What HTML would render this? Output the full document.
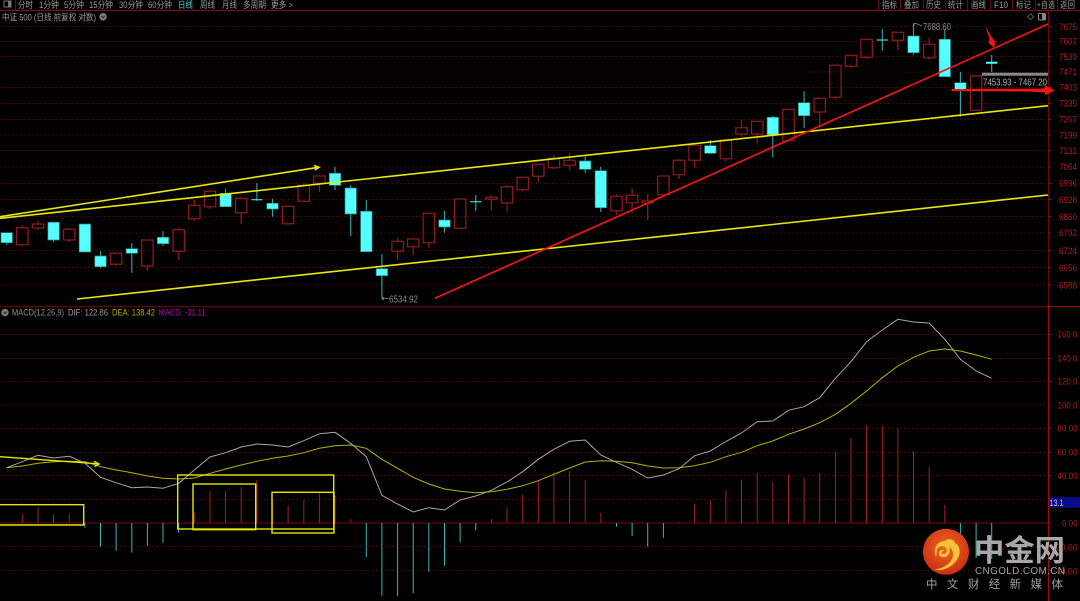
<!DOCTYPE html>
<html>
<head>
<meta charset="utf-8">
<style>
html,body{margin:0;padding:0;background:#000;width:1080px;height:601px;overflow:hidden}
svg{display:block}
text{font-family:"Liberation Sans","Noto Sans CJK SC",sans-serif}
.tb text{font-size:9px;fill:#9a9a9a}
.ax text{font-size:9.5px;fill:#b01c1c}
</style>
</head>
<body>
<svg width="1080" height="601" viewBox="0 0 1080 601" xmlns="http://www.w3.org/2000/svg">
<rect width="1080" height="601" fill="#000"/>
<!-- grid -->
<g stroke="#5a0808" stroke-width="1" stroke-dasharray="1 3" fill="none">
<path d="M0 26.5H1048M0 41.5H1048M0 56.5H1048M0 72H1048M0 87.5H1048M0 103.5H1048M0 119.5H1048M0 135H1048M0 150.5H1048M0 167H1048M0 183.5H1048M0 199.5H1048M0 216.5H1048M0 233H1048M0 250.5H1048M0 267.5H1048M0 285H1048"/>
<path d="M0 334.5H1048M0 358.5H1048M0 381.5H1048M0 405H1048M0 428.5H1048M0 452.5H1048M0 475.5H1048M0 499.5H1048M0 546.5H1048M0 570.5H1048"/>
</g>
<path d="M0 523H1048" stroke="#4a0808" stroke-width="1.4"/>
<!-- frame -->
<path d="M0 10.5H1080" stroke="#8a0a14" stroke-width="1"/>
<path d="M0 306.7H1048" stroke="#6a0a0a" stroke-width="1.2"/>
<path d="M1048 306.7H1080" stroke="#b00c0c" stroke-width="1"/>
<path d="M1048.4 10V306" stroke="#7a0808" stroke-width="1"/>
<path d="M1048.4 306V601" stroke="#b80c0c" stroke-width="1"/>
<path d="M15.5 0V10M878.5 0V10M900.5 0V10M923.5 0V10M945.5 0V10M967.5 0V10M990.5 0V10M1012.5 0V10M1035.5 0V10M1057.5 0V10" stroke="#6a0a12" stroke-width="1"/>
<path d="M1048 26.5h4M1048 41.5h4M1048 56.5h4M1048 72h4M1048 87.5h4M1048 103.5h4M1048 119.5h4M1048 135h4M1048 150.5h4M1048 167h4M1048 183.5h4M1048 199.5h4M1048 216.5h4M1048 233h4M1048 250.5h4M1048 267.5h4M1048 285h4M1048 334.5h4M1048 358.5h4M1048 381.5h4M1048 405h4M1048 428.5h4M1048 452.5h4M1048 475.5h4M1048 523h4M1048 546.5h4M1048 570.5h4" stroke="#8a0a0a" stroke-width="1"/>
<!-- toolbar -->
<rect x="4" y="1" width="7" height="6" fill="none" stroke="#777" stroke-width="1"/>
<rect x="8" y="1" width="3" height="6" fill="#777"/>
<g class="tb">
<text x="18" y="7.8" textLength="15" lengthAdjust="spacingAndGlyphs">分时</text>
<text x="39" y="7.8" textLength="20" lengthAdjust="spacingAndGlyphs">1分钟</text>
<text x="64" y="7.8" textLength="20" lengthAdjust="spacingAndGlyphs">5分钟</text>
<text x="89" y="7.8" textLength="24" lengthAdjust="spacingAndGlyphs">15分钟</text>
<text x="119" y="7.8" textLength="24" lengthAdjust="spacingAndGlyphs">30分钟</text>
<text x="148" y="7.8" textLength="24" lengthAdjust="spacingAndGlyphs">60分钟</text>
<text x="178" y="7.8" textLength="15" lengthAdjust="spacingAndGlyphs" style="fill:#3fd8d8">日线</text>
<text x="200" y="7.8" textLength="15" lengthAdjust="spacingAndGlyphs">周线</text>
<text x="222" y="7.8" textLength="15" lengthAdjust="spacingAndGlyphs">月线</text>
<text x="243" y="7.8" textLength="23" lengthAdjust="spacingAndGlyphs">多周期</text>
<text x="271" y="7.8" textLength="22" lengthAdjust="spacingAndGlyphs">更多 &gt;</text>
<text x="882" y="7.8" textLength="15" lengthAdjust="spacingAndGlyphs">指标</text>
<text x="904" y="7.8" textLength="15" lengthAdjust="spacingAndGlyphs">叠加</text>
<text x="926" y="7.8" textLength="15" lengthAdjust="spacingAndGlyphs">历史</text>
<text x="948" y="7.8" textLength="15" lengthAdjust="spacingAndGlyphs">统计</text>
<text x="971" y="7.8" textLength="15" lengthAdjust="spacingAndGlyphs">画线</text>
<text x="994" y="7.8" textLength="14" lengthAdjust="spacingAndGlyphs">F10</text>
<text x="1016" y="7.8" textLength="15" lengthAdjust="spacingAndGlyphs">标记</text>
<text x="1037" y="7.8" textLength="18" lengthAdjust="spacingAndGlyphs">+自选</text>
<text x="1060" y="7.8" textLength="15" lengthAdjust="spacingAndGlyphs">返回</text>
<text x="2" y="20.5" textLength="94" lengthAdjust="spacingAndGlyphs">中证 500 (日线 前复权 对数)</text>
</g>
<circle cx="103" cy="16.8" r="3.8" fill="#777"/>
<path d="M101.4 16l1.6 1.8 1.6-1.8" fill="none" stroke="#222" stroke-width=".8"/>
<path d="M1030.5 13.7l3 3-3 3-3-3z" fill="none" stroke="#666" stroke-width=".9"/>
<rect x="1038.5" y="13.5" width="7" height="6.5" rx="1" fill="none" stroke="#888" stroke-width="1"/>
<rect x="1042" y="14" width="3" height="5.5" fill="#888"/>
<!-- candle wicks + red candles -->
<path fill="none" stroke="#8e1a1e" stroke-width="1.25" d="
M22.3 225.3V227.7M22.3 244.7V246M16.6 227.7h11.4v17h-11.4z
M38 220.7V224M38 228V230M32.3 224h11.4v4h-11.4z
M69.2 228V229.3M69.2 240V242M63.5 229.3h11.4v10.7h-11.4z
M116.1 264.3V265.7M110.4 253.3h11.4v11h-11.4z
M147.4 266V270.7M141.7 240h11.4v26h-11.4z
M178.7 228V229.7M178.7 251.3V260M173 229.7h11.4v21.6h-11.4z
M194.3 200V205.3M194.3 218.7V220.7M188.6 205.3h11.4v13.4h-11.4z
M210 206.7V208.7M204.3 191.3h11.4v15.4h-11.4z
M241.2 212.7V224M235.5 198.3h11.4v14.4h-11.4z
M288.1 223.7V224.7M282.4 206.3h11.4v17.4h-11.4z
M303.8 183.3V185.3M298.1 185.3h11.4v16h-11.4z
M319.4 183.3V192M313.7 176h11.4v7.3h-11.4z
M397.6 238V241.3M397.6 251.3V260M391.9 241.3h11.4v10h-11.4z
M413.2 238V239M413.2 246.7V255M407.5 239h11.4v7.7h-11.4z
M428.8 242.7V248M423.1 213.3h11.4v29.4h-11.4z
M454.4 199h11.4v29.3h-11.4z
M491.4 195V197.3M491.4 199.3V210M485.7 197.3h11.4v2h-11.4z
M507 185V186.7M507 203V211.7M501.3 186.7h11.4v16.3h-11.4z
M522.7 189.7V191.7M517 177.3h11.4v12.4h-11.4z
M538.3 176.3V182M532.6 164.3h11.4v12h-11.4z
M553.9 154.7V158.3M553.9 167.7V169.3M548.2 158.3h11.4v9.4h-11.4z
M569.6 152.7V160.3M569.6 165.3V170M563.9 160.3h11.4v5h-11.4z
M616.5 194.3V196.3M616.5 210.7V215.3M610.8 196.3h11.4v14.4h-11.4z
M632.1 188.3V195.3M632.1 202.7V213.3M626.4 195.3h11.4v7.4h-11.4z
M647.7 194.3V201M647.7 203V220M642 201h11.4v2h-11.4z
M657.7 176h11.4v18.7h-11.4z
M679 159.3V160.3M679 174.7V179.3M673.3 160.3h11.4v14.4h-11.4z
M694.6 160.3V167.7M688.9 145.3h11.4v15h-11.4z
M725.9 158.7V161.3M720.2 140h11.4v18.7h-11.4z
M741.5 120V127.7M741.5 134V136.7M735.8 127.7h11.4v6.3h-11.4z
M757.2 134V143.3M751.5 121.3h11.4v12.7h-11.4z
M782.8 109.3h11.4v31.4h-11.4z
M819.7 97.3V98.3M819.7 112V126M814 98.3h11.4v13.7h-11.4z
M835.4 97.3V99.3M829.7 65.3h11.4v32h-11.4z
M851 66.3V68M845.3 55.3h11.4v11h-11.4z
M866.6 57.3V59M860.9 39.3h11.4v18h-11.4z
M897.9 40.3V50M892.2 32.3h11.4v8h-11.4z
M929.2 37.3V44.3M929.2 57.7V60M923.5 44.3h11.4v13.4h-11.4z
M970.4 76h11.4v34.3h-11.4z"/>
<!-- cyan wicks -->
<path fill="none" stroke="#34a8a8" stroke-width="1.1" d="
M6.7 242V244.7M53.6 240V242M100.5 251.3V268M131.8 243.3V272.7M163 231.3V246M225.6 188.7V193.3M256.9 183.3V200.7M272.5 198.7V216.7M335 166.7V190M350.7 185.3V236M366.3 200V211.3M381.9 254V298.3M444.5 211V232.7M475.8 195V211M585.2 156.7V172.7M600.8 166.7V212M710.3 140V154M772.8 116V157.3M804.1 91.3V128M882.3 29V50.7M913.5 23.3V54.7M944.8 29.3V39.3M960.4 72V116.7M991.7 55V72"/>
<!-- cyan bodies -->
<path fill="#55ffff" stroke="#2a8c8c" stroke-width=".7" d="
M1 232.7h11.4v10h-11.4z
M47.9 222.3h11.4v17.7h-11.4z
M79.2 224h11.4v28h-11.4z
M94.8 256h11.4v10.7h-11.4z
M126.1 248.7h11.4v4.6h-11.4z
M157.3 237.3h11.4v6.4h-11.4z
M219.9 193.3h11.4v13.4h-11.4z
M266.8 203.3h11.4v5.7h-11.4z
M329.3 173.3h11.4v12h-11.4z
M345 188h11.4v26h-11.4z
M360.6 211.3h11.4v40.4h-11.4z
M376.2 268.7h11.4v7h-11.4z
M438.8 220h11.4v7h-11.4z
M579.5 161h11.4v8.3h-11.4z
M595.1 170.7h11.4v37h-11.4z
M704.6 145.7h11.4v7.6h-11.4z
M767.1 117.3h11.4v17.7h-11.4z
M798.4 102.7h11.4v13h-11.4z
M907.8 36h11.4v16.7h-11.4z
M939.1 39.3h11.4v37.4h-11.4z
M954.7 82.7h11.4v6.6h-11.4z"/>
<path fill="#55ffff" d="M251.2 199.2h11.4v1h-11.4zM470.1 201.2h11.4v1h-11.4zM876.6 39.5h11.4v1h-11.4zM986 61.7h11.4v2h-11.4z"/>
<!-- price labels -->
<text x="389" y="302.5" font-size="10" fill="#8a8a8a" textLength="29" lengthAdjust="spacingAndGlyphs">6534.92</text>
<path d="M381.9 298.5H389M381.9 298.5l2-1.5M381.9 298.5l2 1.5" stroke="#888" stroke-width=".8" fill="none"/>
<text x="923" y="30" font-size="10" fill="#8a8a8a" textLength="28" lengthAdjust="spacingAndGlyphs">7688.60</text>
<path d="M914 26V23.5H916L922 26" stroke="#888" stroke-width=".8" fill="none"/>
<rect x="982" y="72.7" width="66" height="3" fill="#888"/>
<text x="983" y="85.5" font-size="10" fill="#aaa" textLength="64" lengthAdjust="spacingAndGlyphs">7453.93 - 7467.20</text>
<!-- drawn trend lines -->
<g fill="none" stroke="#eaea00" stroke-width="1.6">
<path d="M0 218.3L1048 105.7"/>
<path d="M0 216.7L317 167.6"/>
<path d="M77 299L1048 195"/>
<path d="M314 165.5L319 167.3L314.8 170"/>
</g>
<path d="M435 298.3L1048 24" stroke="#f01414" stroke-width="1.7" fill="none"/>
<path d="M951.5 89L1040 88.6L1045 88V85.5L1055 90.3L1045 95.2V92.5L1030 91.6L951.5 91Z" fill="#f01414"/>
<path d="M985 26L992 37.5L995.5 42L994 47.8L988.5 43L989.5 38.5Z" fill="#f01414"/>
<!-- MACD label -->
<circle cx="5" cy="312.5" r="3.8" fill="#777"/>
<path d="M3.4 311.7l1.6 1.8 1.6-1.8" fill="none" stroke="#222" stroke-width=".8"/>
<text x="12" y="315.5" font-size="9.5" fill="#8c8c8c" textLength="52" lengthAdjust="spacingAndGlyphs">MACD(12,26,9)</text>
<text x="68" y="315.5" font-size="9.5" fill="#9a9a9a" textLength="40" lengthAdjust="spacingAndGlyphs">DIF: 122.86</text>
<text x="112" y="315.5" font-size="9.5" fill="#b0b000" textLength="43" lengthAdjust="spacingAndGlyphs">DEA: 138.42</text>
<text x="158.5" y="315.5" font-size="9.5" fill="#b000b0" textLength="47" lengthAdjust="spacingAndGlyphs">MACD: -31.11</text>
<!-- histogram red -->
<path fill="none" stroke="#a81e22" stroke-width="1" d="M22.3 514V523M38 507.3V523M53.6 514.3V523M69.2 514V523M194.3 512.7V523M210 491V523M225.6 490.7V523M241.2 487.3V523M256.9 480V523M272.5 499.7V523M288.1 506V523M303.8 500V523M319.4 493.3V523M335 496V523M350.7 519.3V523M491.4 519.3V523M507 507.3V523M522.7 495V523M538.3 480.7V523M553.9 472.3V523M569.6 471V523M585.2 480V523M600.8 512.7V523M679 522.3V523M694.6 503.7V523M710.3 500V523M725.9 490.3V523M741.5 480.3V523M757.2 473V523M772.8 482.3V523M788.5 474.3V523M804.1 477.7V523M819.7 472.7V523M835.4 452V523M851 438V523M866.6 425.3V523M882.3 426V523M897.9 428V523M913.5 451V523M929.2 466.7V523M944.8 505V523"/>
<!-- histogram cyan -->
<path fill="none" stroke="#38b4b4" stroke-width="1" d="M84.9 523V527.7M100.5 523V546.7M116.1 523V550.7M131.8 523V552.7M147.4 523V546M163 523V542.7M178.7 523V532.7M366.3 523V557M381.9 523V595.7M397.6 523V596.3M413.2 523V593.3M428.8 523V571.7M444.5 523V565.7M460.1 523V542.3M475.8 523V530.3M616.5 523V526.7M632.1 523V536M647.7 523V546.7M663.4 523V537.7M960.4 523V535M976.1 523V558M991.7 523V559"/>
<!-- DEA -->
<polyline fill="none" stroke="#b4b400" stroke-width="1" points="6.7,467.7 22.3,466 38,463.3 53.6,461.7 69.2,461.3 84.9,461.7 100.5,466.7 116.1,470 131.8,472.7 147.4,476 163,478.3 178.7,479 194.3,478 210,473.3 225.6,469 241.2,465 256.9,461.3 272.5,458.3 288.1,456 303.8,452.7 319.4,448.3 335,445.7 350.7,445 366.3,448.3 381.9,459.3 397.6,468.3 413.2,477.3 428.8,484 444.5,489 460.1,491.3 475.8,492.7 491.4,491.7 507,489.3 522.7,485.7 538.3,480.7 553.9,474.3 569.6,468 585.2,462 600.8,460.7 616.5,461.3 632.1,462.7 647.7,466 663.4,468 679,467.7 694.6,465.7 710.3,462.3 725.9,456.7 741.5,452.3 757.2,445.7 772.8,441 788.5,434.3 804.1,429 819.7,422.7 835.4,414.3 851,403.3 866.6,391 882.3,377.7 897.9,366 913.5,357.3 929.2,351 944.8,349 960.4,351 976.1,355 991.7,359.3"/>
<!-- DIF -->
<polyline fill="none" stroke="#a8a8a8" stroke-width="1" points="6.7,467.7 22.3,461.7 38,455.3 53.6,458 69.2,456.3 84.9,463 100.5,477.3 116.1,482.7 131.8,487.7 147.4,487 163,488.3 178.7,483.3 194.3,470 210,457 225.6,452.7 241.2,447 256.9,444 272.5,445 288.1,447 303.8,440.7 319.4,433.7 335,432.3 350.7,443.3 366.3,456.7 381.9,495.3 397.6,504 413.2,512 428.8,507.7 444.5,510 460.1,500 475.8,496 491.4,490.3 507,482 522.7,471.7 538.3,459.3 553.9,449.3 569.6,441.3 585.2,440 600.8,455 616.5,462.3 632.1,469.3 647.7,478 663.4,475 679,468.7 694.6,455.7 710.3,451 725.9,441.5 741.5,433 757.2,421.7 772.8,421 788.5,410.3 804.1,406.7 819.7,397.7 835.4,378.3 851,361.7 866.6,341.7 882.3,330 897.9,319.3 913.5,322 929.2,323 944.8,339.3 960.4,359.3 976.1,371 991.7,378.3"/>
<!-- MACD annotations -->
<g fill="none" stroke="#e6e600" stroke-width="1.4">
<path d="M0 456.7L98 463.8"/>
<path d="M94 461.3L99 464L94.5 466.5"/>
<path d="M-1 504.7H83.7V525H-1"/>
<rect x="177.7" y="475" width="156" height="54"/>
<rect x="193" y="484" width="62.7" height="45.7"/>
<rect x="272" y="492.3" width="62" height="40.7"/>
</g>
<!-- axis labels -->
<g class="ax">
<text x="1059" y="30" textLength="18" lengthAdjust="spacingAndGlyphs">7675</text>
<text x="1059" y="44.7" textLength="18" lengthAdjust="spacingAndGlyphs">7607</text>
<text x="1059" y="60" textLength="18" lengthAdjust="spacingAndGlyphs">7539</text>
<text x="1059" y="75" textLength="18" lengthAdjust="spacingAndGlyphs">7471</text>
<text x="1059" y="90.7" textLength="18" lengthAdjust="spacingAndGlyphs">7403</text>
<text x="1059" y="106.7" textLength="18" lengthAdjust="spacingAndGlyphs">7335</text>
<text x="1059" y="122.3" textLength="18" lengthAdjust="spacingAndGlyphs">7267</text>
<text x="1059" y="138.3" textLength="18" lengthAdjust="spacingAndGlyphs">7199</text>
<text x="1059" y="154" textLength="18" lengthAdjust="spacingAndGlyphs">7131</text>
<text x="1059" y="170" textLength="18" lengthAdjust="spacingAndGlyphs">7064</text>
<text x="1059" y="186.7" textLength="18" lengthAdjust="spacingAndGlyphs">6996</text>
<text x="1059" y="203" textLength="18" lengthAdjust="spacingAndGlyphs">6928</text>
<text x="1059" y="220" textLength="18" lengthAdjust="spacingAndGlyphs">6860</text>
<text x="1059" y="236" textLength="18" lengthAdjust="spacingAndGlyphs">6792</text>
<text x="1059" y="254" textLength="18" lengthAdjust="spacingAndGlyphs">6724</text>
<text x="1059" y="271" textLength="18" lengthAdjust="spacingAndGlyphs">6656</text>
<text x="1059" y="288.3" textLength="18" lengthAdjust="spacingAndGlyphs">6588</text>
<text x="1057.5" y="337.7" textLength="20" lengthAdjust="spacingAndGlyphs">160.0</text>
<text x="1057.5" y="361.5" textLength="20" lengthAdjust="spacingAndGlyphs">140.0</text>
<text x="1057.5" y="384.5" textLength="20" lengthAdjust="spacingAndGlyphs">120.0</text>
<text x="1057.5" y="408.3" textLength="20" lengthAdjust="spacingAndGlyphs">100.0</text>
<text x="1057.5" y="431.7" textLength="20" lengthAdjust="spacingAndGlyphs">80.00</text>
<text x="1057.5" y="455.5" textLength="20" lengthAdjust="spacingAndGlyphs">60.00</text>
<text x="1057.5" y="479" textLength="20" lengthAdjust="spacingAndGlyphs">40.00</text>
<text x="1062" y="526.5" textLength="15.5" lengthAdjust="spacingAndGlyphs">0.00</text>
<text x="1053" y="550.5" textLength="24.5" lengthAdjust="spacingAndGlyphs">-20.00</text>
<text x="1053" y="574.5" textLength="24.5" lengthAdjust="spacingAndGlyphs">-40.00</text>
</g>
<rect x="1049" y="497.3" width="31" height="10.4" fill="#0b0b8c"/>
<text x="1049.5" y="505.8" font-size="9.5" fill="#c8c8c8" textLength="14" lengthAdjust="spacingAndGlyphs">13.1</text>
<!-- watermark -->
<defs>
<radialGradient id="g" cx="50%" cy="40%" r="60%"><stop offset="0" stop-color="#ee6a1a"/><stop offset="1" stop-color="#cc2c18"/></radialGradient>
</defs>
<circle cx="946" cy="551.7" r="23" fill="url(#g)"/>
<path d="M936 557c-3-7 0-16 9-16c3-3 9-2 10 2c5 2 6 10 3 15c-3 6-10 11-17 12c-3 .5-5 0-6-1c7 0 14-4 17-10c2-5 1-10-3-12c2 4 0 9-4 10c-4 1-7-2-6-5c1-2 4-3 5-1c-3 0-3 3-1 3c3 0 5-3 3-6c-2-3-8-2-9 2c-1 3 0 6-1 7z" fill="#f6c23c"/>
<text x="974" y="561" font-size="30" font-weight="700" fill="#a8a8a8" textLength="91" lengthAdjust="spacingAndGlyphs" style="font-family:'Noto Sans CJK SC',sans-serif">中金网</text>
<text x="975" y="574" font-size="10" fill="#a0a0a0" textLength="90" lengthAdjust="spacing">CNGOLD.COM.CN</text>
<text x="926" y="588" font-size="11.5" fill="#a0a0a0" textLength="137" lengthAdjust="spacing">中文财经新媒体</text>
</svg>
</body>
</html>
